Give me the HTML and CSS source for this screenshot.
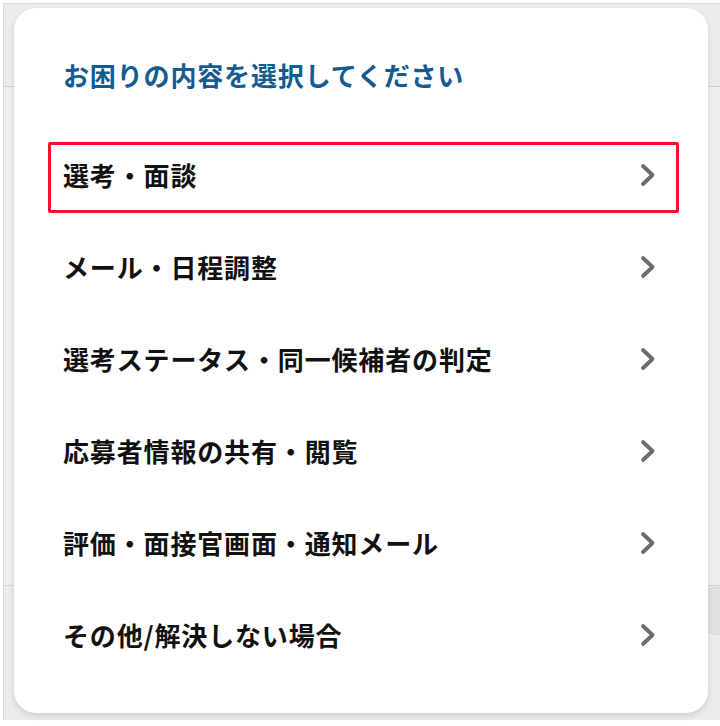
FILE: index.html
```html
<!DOCTYPE html>
<html lang="ja">
<head>
<meta charset="utf-8">
<title>お困りの内容を選択してください</title>
<link rel="stylesheet" href="styles.css">
</head>
<body>
<div class="backdrop">
  <div class="bg-header"></div>
  <div class="bg-content"></div>
  <div class="bg-footer"></div>
  <div class="bg-fab"></div>

  <div class="modal">
    <h1 class="modal-title">お困りの内容を選択してください</h1>
    <ul class="menu">
      <li class="menu-item is-highlighted"><span class="label">選考・面談</span><svg class="chev" viewBox="0 0 16 24"><path d="M3 3 L12.5 12 L3 21"/></svg></li>
      <li class="menu-item"><span class="label">メール・日程調整</span><svg class="chev" viewBox="0 0 16 24"><path d="M3 3 L12.5 12 L3 21"/></svg></li>
      <li class="menu-item"><span class="label">選考ステータス・同一候補者の判定</span><svg class="chev" viewBox="0 0 16 24"><path d="M3 3 L12.5 12 L3 21"/></svg></li>
      <li class="menu-item"><span class="label">応募者情報の共有・閲覧</span><svg class="chev" viewBox="0 0 16 24"><path d="M3 3 L12.5 12 L3 21"/></svg></li>
      <li class="menu-item"><span class="label">評価・面接官画面・通知メール</span><svg class="chev" viewBox="0 0 16 24"><path d="M3 3 L12.5 12 L3 21"/></svg></li>
      <li class="menu-item"><span class="label">その他/解決しない場合</span><svg class="chev" viewBox="0 0 16 24"><path d="M3 3 L12.5 12 L3 21"/></svg></li>
    </ul>
  </div>
</div>
</body>
</html>
```

FILE: styles.css
```css
html, body {
  margin: 0;
  padding: 0;
  background: #ffffff;
}
body {
  width: 720px;
  height: 726px;
  overflow: hidden;
  font-family: "Noto Sans CJK JP", "Noto Sans", sans-serif;
}
.backdrop {
  position: relative;
  margin: 3px 0 0 3px;
  height: 717px;
  border-top: 1px solid #d9d9d9;
  border-left: 1px solid #d9d9d9;
  background: #ebebeb;
  display: flex;
  flex-direction: column;
  box-sizing: border-box;
}
.bg-header {
  height: 82px;
  border-bottom: 1px solid #cfcfcf;
  background: #ececec;
}
.bg-content {
  height: 498px;
  border-bottom: 1px solid #d2d2d2;
  background: #eeeeee;
}
.bg-footer {
  flex: 1;
  background: #ececec;
}
.bg-fab {
  position: absolute;
  left: 690px;
  top: 583px;
  width: 46px;
  height: 46px;
  border-radius: 50%;
  background: #e2e2e2;
  border: 1px solid #d4d4d4;
}
.modal {
  position: absolute;
  left: 10px;
  top: 4px;
  width: 694px;
  height: 705px;
  background: #ffffff;
  border-radius: 22px;
  box-shadow: 0 3px 6px rgba(0,0,0,0.12);
  padding: 48px 29px 0 34px;
  box-sizing: border-box;
  display: flex;
  flex-direction: column;
}
.modal-title {
  margin: 0 0 48px 15px;
  font-size: 26px;
  line-height: 38px;
  font-weight: 700;
  letter-spacing: 0.85px;
  color: #135b90;
}
.menu {
  list-style: none;
  margin: 0;
  padding: 0;
  display: flex;
  flex-direction: column;
  gap: 21px;
}
.menu-item {
  height: 71px;
  box-sizing: border-box;
  border: 3px solid transparent;
  border-radius: 2px;
  padding: 0 20px 6px 12px;
  display: flex;
  align-items: center;
  justify-content: space-between;
}
.menu-item.is-highlighted {
  border-color: #f2122b;
}
.label {
  font-size: 26px;
  font-weight: 700;
  letter-spacing: 0.85px;
  color: #111111;
  line-height: 1;
}
.chev {
  width: 16px;
  height: 24px;
  flex: none;
}
.chev path {
  fill: none;
  stroke: #6c6c6c;
  stroke-width: 3.8;
  stroke-linecap: round;
  stroke-linejoin: round;
}
```
